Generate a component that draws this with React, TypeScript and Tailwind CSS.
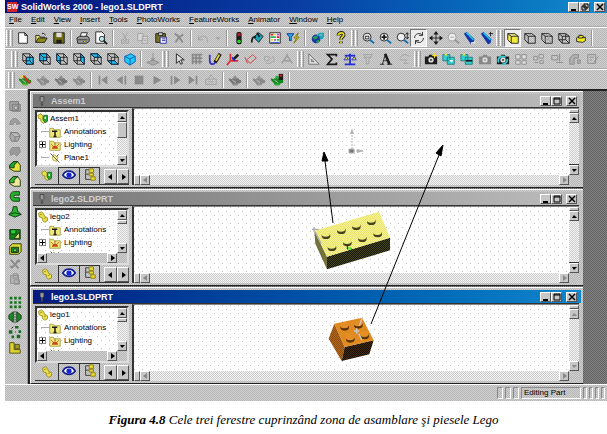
import React from 'react';
import { clsx } from 'clsx';

const ink = '#1c1c1c';
const dim = '#8a8a8a';

function cube(face: 'front' | 'back' | 'left' | 'right' | 'top' | 'bottom') {
  const faces = {
    front: '6,6 14,6 14,14 6,14',
    back: '2,2 10,2 10,10 2,10',
    left: '2,2 6,6 6,14 2,10',
    right: '10,2 14,6 14,14 10,10',
    top: '2,2 10,2 14,6 6,6',
    bottom: '2,10 10,10 14,14 6,14',
  };
  return (
    <g stroke={ink} fill="none">
      <polygon points={faces[face]} fill="#1fc4f4" stroke="#0a58b8" />
      <path d="M2 2h8v8H2zM6 6h8v8H6zM2 2l4 4M10 2l4 4M2 10l4 4M10 10l4 4" />
    </g>
  );
}

function teapot(body: string, accent: string) {
  return (
    <g>
      <path d="M1 6l3 1 1-1h7l1 2h2v3l-3 1-2 2H6l-2-3-3-3z" fill={body} />
      <path d="M6 5h4M8 3v2M5 13h6" stroke={accent} strokeWidth="2" />
      <path d="M5 8l4 3" stroke="#ccc" />
    </g>
  );
}

function magnifier(inner: React.ReactNode, color = ink) {
  return (
    <g fill="none" stroke={color}>
      <circle cx="7" cy="7" r="4.5" fill="#eee" />
      <path d="M10 10l5 4" stroke={color === ink ? '#1673b5' : color} strokeWidth="2" />
      {inner}
    </g>
  );
}

function wireCube(back: React.ReactNode, fill = 'none') {
  return (
    <g stroke={ink} fill={fill}>
      <path d="M2 3h8l4 3v8H6l-4-4zM2 3l4 3h8M6 6v8" />
      {back}
    </g>
  );
}

function camera(fill: string) {
  return (
    <g>
      <path d="M1 5h4l1-2h4l1 2h4v9H1z" fill={fill} />
      <circle cx="8" cy="9" r="3" fill="#ddd" />
      <circle cx="8" cy="9" r="1" fill={fill} />
    </g>
  );
}

function solid(face: string, top: string) {
  return (
    <g stroke="#123312">
      <path d="M2 7l4-4h5l3 4v7H7l-5-3z" fill={face} />
      <path d="M2 7l4-4h5l-4 4v3L2 10z" fill={top} />
    </g>
  );
}

const icons: Record<string, React.ReactNode> = {
  new: <path d="M3 2h7l3 3v9H3zM10 2v3h3" fill="#fff" stroke={ink} />,
  open: (
    <g stroke={ink}>
      <path d="M2 13V5h4l1 2h5v2" fill="#e8e070" />
      <path d="M2 13l3-5h10l-3 5z" fill="#8f8a18" />
      <path d="M9 3c2-1 3 0 4 2" fill="none" />
    </g>
  ),
  save: (
    <g>
      <path d="M2 2h12v12H2z" fill="#6f6c14" stroke={ink} />
      <path d="M5 2h6v5H5z" fill="#ddd" />
      <path d="M5 10h6v4H5z" fill={ink} />
    </g>
  ),
  print: (
    <g stroke={ink}>
      <path d="M5 7l1-5h7l-2 5" fill="#fff" />
      <path d="M1 8l3-2h9l2 2v4l-3 2H2z" fill="#999" />
      <path d="M2 10h11M8 12h4" stroke="#333" />
      <path d="M9 12h2" stroke="#e5d500" />
    </g>
  ),
  preview: (
    <g stroke={ink} fill="#fff">
      <path d="M2 1h7l3 3v10H2z" />
      <circle cx="9" cy="9" r="3" fill="#bde9ef" />
      <path d="M11 11l4 4" strokeWidth="2" />
    </g>
  ),
  cut: <path d="M5 2l5 8M11 2L6 10M4 10h3v4H4zM9 10h3v4H9z" stroke="#a0a0a0" fill="none" />,
  copy: <path d="M2 3h6v8H2zM7 6h6v8H7zM9 9h3M9 11h3" stroke="#a0a0a0" fill="#d8d8d8" />,
  paste: (
    <g stroke={ink}>
      <path d="M2 3h11v10H2z" fill="#77721d" />
      <path d="M5 2h5v3H5z" fill="#ddd" />
      <path d="M7 7h7v7H7z" fill="#fff" stroke="#19209a" />
      <path d="M9 9h4M9 11h4" stroke="#19209a" />
    </g>
  ),
  delete: <path d="M3 3c4 2 7 6 9 10M13 4C9 6 6 9 4 13" stroke={dim} strokeWidth="2" fill="none" />,
  undo: <path d="M3 5v5h5M3 10c2-5 9-6 10 0v3" stroke="#a0a0a0" fill="none" />,
  caret: <path d="M5 7h6l-3 3z" fill="#a0a0a0" />,
  traffic: (
    <g>
      <rect x="5" y="1" width="6" height="14" rx="2" fill={ink} />
      <circle cx="8" cy="4" r="2" fill="#b02020" />
      <circle cx="8" cy="12" r="2" fill="#24e024" />
    </g>
  ),
  paint: (
    <g stroke={ink}>
      <path d="M4 7l6-5 5 4-5 7z" fill="#18a6b8" />
      <path d="M2 13c0-4 1-7 5-6M8 2l3 5" fill="none" strokeWidth="2" />
    </g>
  ),
  palette: (
    <g>
      <path d="M2 2h12v12H2z" fill="#fff" stroke={ink} />
      <path d="M3 4h3M10 7h3" stroke="#e02020" strokeWidth="2" />
      <path d="M7 4h2M3 10h3" stroke="#e9de20" strokeWidth="2" />
      <path d="M10 4h3M7 10h2" stroke="#c33ec3" strokeWidth="2" />
      <path d="M3 7h6M10 10h3" stroke="#30b060" strokeWidth="2" />
      <path d="M3 13h10" stroke="#2038c0" />
    </g>
  ),
  filter: (
    <g>
      <path d="M1 3h8l-3 4v4H4V7z" fill="#27a9d8" stroke="#1234a0" />
      <path d="M14 2L9 8h3l-3 6 6-7h-3z" fill="#f2e61c" stroke="#77700c" />
    </g>
  ),
  globe: (
    <g>
      <circle cx="7" cy="9" r="5" fill="#1735a5" />
      <path d="M3 7l4-2 2 3-4 2zM7 11l3-1 1 2-3 2z" fill="#25a04a" />
      <path d="M8 6l3-3h4v3h-3v2h3" stroke="#18a6b8" fill="none" strokeWidth="2" />
    </g>
  ),
  help: (
    <g fill="none">
      <path d="M5 5c0-4 7-4 6 0-1 2-3 2-3 5M8 12v2" stroke={ink} strokeWidth="4" />
      <path d="M5 5c0-4 7-4 6 0-1 2-3 2-3 5M8 12v2" stroke="#eade18" strokeWidth="2" />
    </g>
  ),
  zoomFit: magnifier(<path d="M5 6h4v3H5z" />),
  zoomIn: magnifier(<path d="M4 7h6M7 4v6" strokeWidth="2" />),
  zoomDrag: magnifier(<path d="M14 2v7M12 4l2-2 2 2M12 7l2 2 2-2" />),
  rotate: <path d="M3 8c0-5 6-7 9-3M12 1v4H8M13 8c0 5-6 7-9 3M4 15v-4h4" stroke={ink} fill="none" />,
  pan: (
    <g>
      <path d="M8 2v12M2 8h12" stroke={ink} />
      <path d="M8 0l3 4H5zM8 16l3-4H5zM0 8l4-3v6zM16 8l-4-3v6z" fill={ink} />
    </g>
  ),
  zoomOut: magnifier(<path d="M5 7h4" />, '#989898'),
  view: (
    <g>
      <path d="M1 3l3-2 9 8-1 5-3 1z" fill="#1238a8" />
      <path d="M4 2l8 8" stroke="#20c0ec" strokeWidth="2" />
      <path d="M9 14l5-1" stroke="#e6e6e6" strokeWidth="2" />
    </g>
  ),
  viewPlus: (
    <g>
      <path d="M1 3l3-2 9 8-1 5-3 1z" fill="#1238a8" />
      <path d="M4 2l8 8" stroke="#20c0ec" strokeWidth="2" />
      <path d="M12 1v5M10 3h5" stroke={ink} />
    </g>
  ),
  shaded: wireCube(null, '#f2ea3c'),
  hidden: wireCube(null),
  hiddenGray: wireCube(<path d="M10 3v7H2M10 10l4 4" stroke="#999" />),
  wireframe: wireCube(<path d="M10 3v7H2M10 10l4 4" />),
  section: (
    <g stroke={ink} fill="#f2ea1c">
      <path d="M3 8l3-3h3v3l4-1v4l-3 2-7-1z" />
      <path d="M6 5h3l2 1-2 2H5z" />
    </g>
  ),
  front: cube('front'),
  back: cube('back'),
  left: cube('left'),
  right: cube('right'),
  top: cube('top'),
  bottom: cube('bottom'),
  iso: (
    <g stroke="#0d57b4">
      <path d="M2 5l7-3 5 3v6l-6 4-6-4z" fill="#22c8f6" />
      <path d="M2 5l6 3 6-3M8 8v7" fill="none" />
    </g>
  ),
  normal: <path d="M8 1v8M6 7l2 3 2-3M1 12l7-3 7 3-7 3z" stroke={dim} fill="#aaa" />,
  select: <path d="M5 2v11l3-3 2 4 2-1-2-4h4z" fill="#ddd" stroke={ink} />,
  grid: <path d="M2 3h12M2 7h12M2 11h12M3 2v12M7 2v12M11 2v12" stroke={dim} strokeWidth="2" />,
  sketch: (
    <g fill="none">
      <path d="M2 3v7c0 5 6 5 6 1" stroke="#3730c0" strokeWidth="2" />
      <path d="M14 2L8 12" stroke={ink} strokeWidth="4" />
      <path d="M13 3l-4 7" stroke="#ebd73a" strokeWidth="2" />
    </g>
  ),
  sketch3d: (
    <g fill="none">
      <path d="M5 2v8h9M5 10l-4 5" stroke="#e03030" strokeWidth="2" />
      <path d="M14 3L8 9" stroke={ink} strokeWidth="3" />
      <path d="M7 6l3 4" stroke="#2028d0" strokeWidth="2" />
    </g>
  ),
  dimension: <path d="M3 9l7-6 4 4-7 6zM1 6l3 7" stroke="#d63838" fill="none" />,
  mirror: <path d="M3 5h5v5H3zM9 8l4-3 1 6-5 1M4 13h6" stroke="#a5a5a5" fill="none" />,
  pattern: <path d="M2 13l6-9 6 9M5 10h6M8 2v3" stroke="#a0a0a0" fill="none" strokeWidth="2" />,
  ruler: <path d="M2 2l12 12H2zM5 8l3 3H5z" stroke="#707070" fill="#ddd" />,
  sigma: <path d="M13 5V3H3l5 5-5 6h10v-2" stroke={ink} fill="none" strokeWidth="2" />,
  balance: (
    <g fill="none" stroke="#1f2fd2" strokeWidth="2">
      <path d="M8 2v12M2 4h12M2 14h12" />
      <path d="M1 9h5l-2-4zM10 9h5l-2-4z" fill="#eadc2c" strokeWidth="1" />
    </g>
  ),
  surface: <path d="M3 3h10l-4 6v4l-3 1V9zM3 6h8" stroke="#a0a0a0" fill="none" />,
  note: (
    <g fill="none" stroke={ink}>
      <path d="M1 14h5M9 14h6M4 14L7 3M6 10h5" />
      <path d="M7 2l5 12" strokeWidth="3" />
    </g>
  ),
  curve: <path d="M3 7c4-6 8-4 11-2M3 9h8l-3 4h5" stroke="#a0a0a0" fill="none" />,
  camera: (
    <g>
      {camera(ink)}
      <path d="M12 1v6M9 4h6" stroke="#efe331" />
    </g>
  ),
  cameraDown: (
    <g>
      <path d="M1 3h8v7H1zM6 6h8v8H6z" fill="#38cfd4" stroke="#147d80" />
      <path d="M8 9h5l-2 3z" fill="#fff" />
      <path d="M3 3h3" stroke="#efe331" strokeWidth="2" />
    </g>
  ),
  cameraStack: (
    <g>
      <path d="M1 3h8v7H1zM6 6h8v8H6z" fill="#38cfd4" stroke="#147d80" />
      <path d="M7 10h7" stroke={ink} strokeWidth="2" />
      <path d="M3 3h3" stroke="#efe331" strokeWidth="2" />
    </g>
  ),
  cameraOff: camera('#888'),
  cameraSpin: (
    <g>
      {camera(ink)}
      <path d="M3 12c-2-5 3-9 8-6M13 8c0 4-3 6-6 6" stroke="#32cdd2" fill="none" strokeWidth="2" />
    </g>
  ),
  table: <path d="M2 3h5v5H2zM9 3h5v5H9zM2 10h5v4H2zM9 10h5v4H9z" stroke={dim} fill="#ddd" />,
  explode: <path d="M2 5h4v4H2zM8 3h5v4H8zM9 10h4v3H9zM3 12h4" stroke={dim} fill="#ccc" />,
  annotate: <path d="M2 4h7v5H2zM11 2v9M7 12h8" stroke={dim} fill="none" />,
  layer: <path d="M2 7l4-4h6v4H7v7H2zM11 9h3v4h-3z" stroke={dim} fill="#b0b0b0" />,
  edit: <path d="M2 3h9v10H2zM4 6h5M4 9h3M14 5l-5 7" stroke={dim} fill="none" />,
  render: (
    <g>
      {teapot('#218b21', '#5cbb37')}
      <path d="M6 3l8 9" stroke="#e82222" strokeWidth="2" />
      <path d="M3 3h3v2H3z" fill="#eadc2c" />
    </g>
  ),
  potGray: teapot('#8a8a8a', '#9b9b9b'),
  potDark: teapot('#777777', '#8f8f8f'),
  potGreen: (
    <g>
      {teapot('#128a20', '#20b030')}
      <path d="M10 1h5v7h-5z" fill={ink} />
      <path d="M11 3h3" stroke="#e82222" strokeWidth="2" />
    </g>
  ),
  first: <path d="M3 3h2v10H3zM13 3v10L6 8z" fill={dim} />,
  prev: <path d="M10 3v10L3 8zM12 3h2v10h-2z" fill={dim} />,
  stop: <path d="M3 3h10v10H3z" fill={dim} />,
  play: <path d="M4 3l9 5-9 5z" fill={dim} />,
  step: <path d="M3 3h2v10H3zM7 3l7 5-7 5z" fill={dim} />,
  last: <path d="M3 3l7 5-7 5zM11 3h2v10h-2z" fill={dim} />,
  record: <path d="M2 7h12v6H2zM5 7l3-5 4 5M5 10h6" stroke="#a0a0a0" fill="none" />,
  extrudeOff: (
    <g stroke="#777" fill="#a5a5a5">
      <path d="M2 3h10v10H2zM5 6h9v8H5z" />
      <circle cx="9" cy="10" r="2" fill="#ccc" />
    </g>
  ),
  sweepOff: <path d="M2 12c1-9 9-9 12-1l-4 1c-1-4-3-4-4 0z" stroke="#888" fill="#9f9f9f" />,
  loftOff: <path d="M3 4h8l3 4-3 6H4l-2-5zM3 4l5 5 6-1M8 9v5" stroke="#777" fill="#a9a9a9" />,
  ribOff: <path d="M2 8l3-4h8l1 5-4 5-3-3-4 2z" stroke="#888" fill="#999" />,
  fillet: solid('#eae13c', '#21a72c'),
  chamfer: solid('#f1e89a', '#35b62d'),
  shell: <path d="M13 3H7C1 3 1 14 7 14h6v-4H8c-2 0-2-3 0-3h5z" fill="#24b52c" stroke="#123312" />,
  draft: (
    <g stroke="#123312" fill="#24b52c">
      <path d="M6 3h4l1 5 4 4-7 3-7-3 4-4z" />
      <path d="M1 12l7-2 7 2" fill="none" />
    </g>
  ),
  rib: (
    <g stroke="#123312">
      <path d="M2 3h12v11H2z" fill="#14821c" />
      <path d="M3 3h6v5H3z" fill="#25d036" />
      <path d="M13 6v7H7z" fill="#f0ea80" />
    </g>
  ),
  hole: (
    <g stroke="#123312">
      <path d="M2 5l3-3h10v9l-3 3H2z" fill="#e3d92e" />
      <path d="M4 6h8v6H4z" fill="#1e9c28" />
      <path d="M6 8h4v3H6z" fill="#6ae26a" />
    </g>
  ),
  cutOff: <path d="M3 3l9 10M13 3L4 13M2 11h4M9 5h5" stroke={dim} fill="none" strokeWidth="2" />,
  wrapOff: <path d="M3 4h9v9H3zM6 2h5v5H6zM7 9h6v5H7z" stroke="#8d8d8d" fill="#b5b5b5" />,
  linear: <path d="M2 2h3v3H2zM7 2h3v3H7zM12 2h3v3h-3zM2 7h3v3H2zM7 7h3v3H7zM12 7h3v3h-3zM2 12h3v3H2zM7 12h3v3H7zM12 12h3v3h-3z" fill="#14731c" />,
  mirrorFeature: (
    <g fill="#1a8a24" stroke="#123312">
      <path d="M6 2v12l-5-4V6zM10 2v12l5-4V6z" />
      <path d="M8 1v14" strokeDasharray="2 1" />
    </g>
  ),
  circular: (
    <g fill="#1b6c22">
      <path d="M8 1h4v3H8zM1 6h4v4H1zM4 12h3v3H4zM10 11h4v4h-4zM12 6h3v3h-3z" />
      <path d="M4 4l2-2M8 8h1" stroke={ink} />
    </g>
  ),
  move: (
    <g stroke="#4f4a0c" fill="#ded42e">
      <path d="M2 3h5v8h7v4H2z" />
      <path d="M8 5h5v5H8z" fill="#a69b24" />
    </g>
  ),
  part: (
    <g stroke="#8a7d10" fill="#ece04a">
      <path d="M2 3l4-2 3 3 1 3 4 2v4l-4 2-3-3V9L3 8z" />
      <path d="M4 5l3-1M9 10l3-1" fill="none" />
    </g>
  ),
  assembly: (
    <g>
      <path d="M1 3l4-2 3 3v4l3 3-2 3-4-3V8L2 7z" fill="#ece04a" stroke="#8a7d10" />
      <path d="M9 3h5v8l-3 2-3-4z" fill="#26a434" stroke="#0d5c18" />
      <path d="M10 5h2v3h-2z" fill="#e8f8e8" />
    </g>
  ),
  annotations: (
    <g>
      <path d="M1 3h5l1 2h8v10H1z" fill="#f0e878" stroke="#9a913a" />
      <path d="M4 7h7M8 7v7M6 14h4" stroke={ink} strokeWidth="2" />
    </g>
  ),
  lighting: (
    <g>
      <path d="M1 3h5l1 2h8v10H1z" fill="#f0e878" stroke="#9a913a" />
      <path d="M4 13c0-6 8-6 8 0z" fill="#c7481c" />
      <path d="M8 5v3M3 7l2 2M13 7l-2 2" stroke="#8b3a18" />
    </g>
  ),
  plane: (
    <g>
      <path d="M6 3l6 4-2 6-6-4z" fill="#f6ef94" stroke="#a79e3b" />
      <path d="M2 2l12 12M13 3l-3 3" stroke="#333" />
    </g>
  ),
  eye: (
    <g>
      <path d="M1 8c3-6 11-6 14 0-3 5-11 5-14 0z" fill="#fff" stroke="#15208c" strokeWidth="2" />
      <circle cx="8" cy="8" r="3" fill="#1526d0" />
    </g>
  ),
  config: (
    <g>
      <path d="M3 2v11h6M3 7h5M3 2h5" stroke="#333" fill="none" />
      <path d="M7 1h5v4H7zM7 6h5v3H7zM9 10h5v4H9z" fill="#e8da30" stroke="#8a7d10" />
    </g>
  ),
  pin: <path d="M5 1h6v6l-2 2v6H7V9L5 7z" fill="#9c9c9c" stroke="#2c2c2c" />,
};

function Icon({ name, className = 'size-4' }: { name: string; className?: string }) {
  return (
    <svg viewBox="0 0 16 16" className={clsx('shrink-0', className)} fill="none" aria-hidden="true">
      {icons[name]}
    </svg>
  );
}

const face = 'bg-[conic-gradient(#b8b8b8_25%,#cfcfcf_0_50%,#b8b8b8_0_75%,#cfcfcf_0)] bg-size-[2px_2px]';
const track = 'bg-[conic-gradient(#cccccc_25%,#f4f4f4_0_50%,#cccccc_0_75%,#f4f4f4_0)] bg-size-[2px_2px]';
const desk = 'bg-[conic-gradient(#606060_25%,#868686_0_50%,#606060_0_75%,#868686_0)] bg-size-[2px_2px]';
const dots =
  'bg-white bg-[image:conic-gradient(from_270deg_at_1px_1px,#c6c6c6_90deg,transparent_0),conic-gradient(from_270deg_at_1px_1px,#c6c6c6_90deg,transparent_0)] bg-size-[8px_8px] [background-position:0_0,4px_4px]';
const raised = 'border border-t-white border-l-white border-r-[#555] border-b-[#555] bg-[#c6c6c6]';
const sunken = 'border border-t-[#888] border-l-[#888] border-r-white border-b-white';

function Grip() {
  return (
    <div className="flex h-4 w-[9px] shrink-0 justify-center gap-px">
      <span className="w-[3px] border-r border-l border-r-[#999] border-l-white" />
      <span className="w-[3px] border-r border-l border-r-[#999] border-l-white" />
    </div>
  );
}

function Separator() {
  return (
    <div className="flex h-4 w-1.5 shrink-0 justify-center">
      <span className="w-0.5 border-r border-l border-r-white border-l-[#999]" />
    </div>
  );
}

// '|' is a separator, '#' a toolbar grip, a leading '*' marks a pressed button
function Tools({ tools, wide = false }: { tools: string[]; wide?: boolean }) {
  return (
    <>
      {tools.map((tool, i) => {
        if (tool === '|') return <Separator key={i} />;
        if (tool === '#') return <Grip key={i} />;
        const pressed = tool.startsWith('*');
        const name = pressed ? tool.slice(1) : tool;
        return (
          <button
            key={i}
            type="button"
            aria-label={name}
            aria-pressed={pressed}
            className={clsx(
              'flex h-[18px] shrink-0 items-center justify-center',
              name === 'caret' ? 'w-3' : wide ? 'w-[18px]' : 'w-[17px]',
              pressed && 'border border-t-[#777] border-l-[#777] border-r-white border-b-white bg-[#ececec]',
            )}
          >
            <Icon name={name} className="size-3.5" />
          </button>
        );
      })}
    </>
  );
}

const menus = ['File', 'Edit', 'View', 'Insert', 'Tools', 'PhotoWorks', 'FeatureWorks', 'Animator', 'Window', 'Help'];

const standard = ['new', 'open', 'save', '|', 'print', 'preview', '|', 'cut', 'copy', 'paste', 'delete', '|', 'undo', 'caret', '|', 'traffic', 'paint', 'palette', 'filter', '|', 'globe', '|', 'help'];
const viewTools = ['#', 'zoomFit', 'zoomIn', 'zoomDrag', '*rotate', 'pan', 'zoomOut', 'view', 'viewPlus', '#', '*shaded', 'hidden', 'hiddenGray', 'wireframe', 'section', '|'];
const orientation = ['front', 'back', 'left', 'right', 'top', 'bottom', 'iso', '|', 'normal', '#'];
const sketchTools = ['select', 'grid', 'sketch', 'sketch3d', 'dimension', 'mirror', 'pattern', '#', 'ruler', 'sigma', 'balance', 'surface', 'note', 'curve', '#'];
const cameraTools = ['camera', 'cameraDown', 'cameraStack', 'cameraOff', 'cameraSpin', 'table', 'explode', 'annotate', 'layer', 'edit'];
const animation = ['render', 'potGray', 'potDark', 'potGray', '|', 'first', 'prev', 'stop', 'play', 'step', 'last', 'record', '|', 'potDark', '|', 'potGray', 'potGreen', '|'];

const features = [
  ['extrudeOff', 'sweepOff', 'loftOff', 'ribOff', 'fillet', 'chamfer', 'shell', 'draft'],
  ['rib', 'hole', 'cutOff', 'wrapOff'],
  ['linear', 'mirrorFeature', 'circular', 'move'],
];

function WindowButtons({ restore = false }: { restore?: boolean }) {
  const button = clsx('flex h-[10px] items-center justify-center', raised);
  return (
    <div className="flex shrink-0">
      <button type="button" aria-label="Minimize" className={clsx(button, 'w-[11px]')}>
        <svg viewBox="0 0 8 8" className="size-2">
          <path d="M1 6h5v2H1z" fill="#000" />
        </svg>
      </button>
      <button type="button" aria-label={restore ? 'Restore' : 'Maximize'} className={clsx(button, 'w-[11px]')}>
        <svg viewBox="0 0 8 8" className="size-2" fill="none" stroke="#000">
          {restore ? <path d="M3 1h4v4H3zM1 3h4v4H1z" /> : <path d="M1 1h6v6H1zM1 2h6" />}
        </svg>
      </button>
      <button type="button" aria-label="Close" className={clsx(button, 'ml-1 w-[11px]')}>
        <svg viewBox="0 0 8 8" className="size-2" stroke="#000" strokeWidth="1.5">
          <path d="M1 1l6 6M7 1L1 7" />
        </svg>
      </button>
    </div>
  );
}

const arrows = {
  up: 'M2 6h5L4 3z',
  down: 'M2 3h5L4 6z',
  left: 'M6 1v6L2 4z',
  right: 'M3 1v6l4-3z',
};

function ArrowButton({ dir, faded = false }: { dir: keyof typeof arrows; faded?: boolean }) {
  return (
    <button type="button" aria-label={`Scroll ${dir}`} className={clsx('flex size-2.5 shrink-0 items-center justify-center', raised)}>
      <svg viewBox="0 0 8 8" className="size-2">
        <path d={arrows[dir]} fill={faded ? '#888' : '#000'} />
      </svg>
    </button>
  );
}

function FeatureTree({ name, icon, scroll }: { name: string; icon: string; scroll: boolean }) {
  const items = ['Annotations', 'Lighting', 'Plane1'];
  return (
    <div className="flex w-[98px] shrink-0 flex-col px-0.5 pt-0.5">
      <div className="flex h-[57px] border-2 border-t-[#333] border-l-[#333] border-r-[#ddd] border-b-[#ddd]">
        <div className={clsx('flex min-w-0 flex-1 flex-col overflow-hidden', dots)}>
          <ul className="min-h-0 flex-1 overflow-hidden text-[8px] leading-[13px]">
            <li className="flex items-center gap-px">
              <Icon name={icon} className="size-3" />
              {name}
            </li>
            {items.map((item) => (
              <li key={item} className="flex items-center">
                <span className="flex w-3 shrink-0 items-center">
                  {item === 'Lighting' ? (
                    <button type="button" aria-label="Expand Lighting" className="ml-0.5 flex size-[7px] items-center justify-center border border-[#888] bg-white">
                      <svg viewBox="0 0 5 5" className="size-[5px]" stroke="#000">
                        <path d="M0 2.5h5M2.5 0v5" />
                      </svg>
                    </button>
                  ) : (
                    <span className="ml-1 h-px w-2 bg-[#aaa]" />
                  )}
                </span>
                <Icon name={item.replace(/\d/, '').toLowerCase()} className="mr-[3px] size-3" />
                {item}
              </li>
            ))}
          </ul>
          {scroll && (
            <div className={clsx('flex justify-between', track)}>
              <ArrowButton dir="left" />
              <div className={clsx('flex-1', face)} />
              <ArrowButton dir="right" />
            </div>
          )}
        </div>
        <div className={clsx('flex w-2.5 flex-col', track)}>
          <ArrowButton dir="up" />
          <div className={clsx(scroll ? 'h-1' : 'h-4', raised)} />
          <div className="flex-1" />
          <ArrowButton dir="down" />
          {scroll && <div className={clsx('h-2.5', face)} />}
        </div>
      </div>
      <div className="flex h-[18px] border-b border-b-[#333]">
        <button type="button" aria-label="Feature tree" className="flex w-[23px] items-center justify-center">
          <Icon name={icon} className="size-3" />
        </button>
        <button type="button" aria-label="Properties" className="flex w-[22px] items-start justify-center border-t border-r border-l border-[#333]">
          <Icon name="eye" className="size-3.5" />
        </button>
        <button type="button" aria-label="Configurations" className="flex w-[20px] items-start justify-center border-t border-r border-[#333]">
          <Icon name="config" className="size-3.5" />
        </button>
        <div className="flex flex-1 pt-0.5 pl-1">
          {(['left', 'right'] as const).map((dir) => (
            <button key={dir} type="button" aria-label={`Tabs ${dir}`} className={clsx('flex flex-1 items-center justify-center', raised)}>
              <svg viewBox="0 0 8 8" className="size-2">
                <path d={arrows[dir]} />
              </svg>
            </button>
          ))}
        </div>
      </div>
    </div>
  );
}

interface ChildProps {
  title: string;
  name: string;
  icon: string;
  active?: boolean;
  scroll?: boolean;
  children: React.ReactNode;
}

function ChildWindow({ title, name, icon, active = false, scroll = true, children }: ChildProps) {
  return (
    <section className={clsx('border-t border-b border-l border-t-white border-b-[#222] border-l-white p-0.5', face)}>
      <header
        className={clsx(
          'flex h-[13px] items-center gap-1 px-1 text-[9px] leading-3 font-bold',
          active
            ? 'bg-linear-to-r from-[#061a80] to-[#1186cc] text-white'
            : 'bg-linear-to-r from-[#767676] to-[#bdbdbd] text-[#cfcfcf]',
        )}
      >
        <Icon name="pin" className="size-2.5" />
        <h2 className="flex-1">{title}</h2>
        <WindowButtons />
      </header>
      <div className="mr-0.5 flex border-t border-t-[#333]">
        <FeatureTree name={name} icon={icon} scroll={scroll} />
        <div className="ml-px flex min-w-0 flex-1 flex-col border-t border-l-2 border-t-[#888] border-l-[#333]">
          <div className="flex">
            <div className={clsx('flex h-[66px] flex-1 items-center justify-center', dots)}>{children}</div>
            <div className={clsx('flex w-2.5 flex-col', track)}>
              <div className={clsx('h-1', raised)} />
              <ArrowButton dir="up" faded={active} />
              <div className={clsx('flex-1', !active && 'border-b border-b-[#333]')} />
              <ArrowButton dir="down" faded={active} />
            </div>
          </div>
          <div className={clsx('flex h-2.5', track)}>
            <div className={clsx('w-1.5', raised)} />
            <ArrowButton dir="left" faded />
            <div className="flex-1" />
            <ArrowButton dir="right" faded />
            <div className={clsx('w-2.5', face)} />
          </div>
        </div>
      </div>
    </section>
  );
}

function Triad() {
  return (
    <svg viewBox="0 0 32 30" width="32" height="30" fill="#b4b4b4" stroke="#b4b4b4">
      <path d="M16 5v19" strokeDasharray="2 1" />
      <path d="M16 1l2 6h-4z" stroke="none" />
      <path d="M16 24h11" strokeDasharray="3 1" />
      <path d="M21 22l7 2-7 2z" stroke="none" />
      <path d="M13 22h5v4h-5z" fill="#777" />
    </svg>
  );
}

function Stud({ x, y, top, shade }: { x: number; y: number; top: string; shade: string }) {
  return (
    <g>
      <ellipse cx={x} cy={y + 3} rx="13" ry="10" fill={shade} />
      <ellipse cx={x - 1} cy={y - 3} rx="13" ry="9" fill={top} />
    </g>
  );
}

function YellowBrick() {
  const studs = [[211, 77], [166, 92], [121, 104], [75, 119], [230, 114], [184, 128], [139, 141], [93, 155]];
  return (
    <svg viewBox="33 48 240 177" width="80" height="59">
      <defs>
        <pattern id="olive" width="6" height="6" patternUnits="userSpaceOnUse">
          <path d="M0 0h6v6H0z" fill="#17170a" />
          <path d="M0 0h3v3H0zM3 3h3v3H3z" fill="#46441a" />
        </pattern>
        <pattern id="cream" width="6" height="6" patternUnits="userSpaceOnUse">
          <path d="M0 0h6v6H0z" fill="#f6f29a" />
          <path d="M0 0h3v3H0zM3 3h3v3H3z" fill="#e9e468" />
        </pattern>
      </defs>
      <path d="M40 107L78 185V223L43 146z" fill="#74713a" />
      <path d="M78 185L267 128V166L78 223z" fill="url(#olive)" />
      <path d="M40 107L234 50L267 128L78 185z" fill="url(#cream)" />
      {studs.map(([x, y]) => (
        <Stud key={x} x={x} y={y} top="#efea7a" shade="#44411c" />
      ))}
      <path d="M33 103h20M39 97v13M42 110l18 36" stroke="#aaa" strokeWidth="4" />
      <path d="M139 150v12h14" stroke="#222" strokeWidth="3" fill="none" />
      <path d="M141 156h9v9h-9z" fill="#6fe23c" />
    </svg>
  );
}

function OrangeBrick() {
  const studs = [[175, 100], [134, 106], [194, 132], [151, 142]];
  return (
    <svg viewBox="84 72 144 141" width="48" height="47">
      <defs>
        <pattern id="brown" width="6" height="6" patternUnits="userSpaceOnUse">
          <path d="M0 0h6v6H0z" fill="#8a4d10" />
          <path d="M0 0h3v3H0zM3 3h3v3H3z" fill="#b5661c" />
        </pattern>
        <pattern id="dark" width="6" height="6" patternUnits="userSpaceOnUse">
          <path d="M0 0h6v6H0z" fill="#100c06" />
          <path d="M0 0h3v3H0zM3 3h3v3H3z" fill="#4a2e0c" />
        </pattern>
      </defs>
      <path d="M103 98L134 168L125 210L86 143z" fill="url(#brown)" />
      <path d="M134 168L221 148L208 190L125 210z" fill="url(#dark)" />
      <path d="M103 98L186 80L221 148L134 168z" fill="#e08a20" />
      {studs.map(([x, y]) => (
        <Stud key={x} x={x} y={y} top="#e58e24" shade="#5c340a" />
      ))}
      <path d="M186 82l-8 22M162 120h16M170 112v16M176 128l10 20" stroke="#c9c9c9" strokeWidth="4" />
    </svg>
  );
}

// Leader lines from the two bricks up to the assembly area
function Leaders() {
  return (
    <svg viewBox="0 0 140 190" width="140" height="190" className="pointer-events-none absolute top-[50px] left-[284px]" stroke="#000">
      <path d="M19 82L11 20M57 183L125 14" />
      <path d="M10 11l-2 9h6zM129 4l-7 8 5 3z" fill="#000" />
    </svg>
  );
}

export default function App() {
  return (
    <div className="bg-white font-['Liberation_Sans',Arial,sans-serif] text-black">
      <main className={clsx('ml-[5px] overflow-hidden', face)}>
        <header className="flex h-[13px] items-center gap-1 bg-linear-to-r from-[#05127c] via-[#0a3fa4] to-[#138bcc] pr-0.5 text-[9px] leading-3 font-bold text-white">
          <span className="ml-0.5 w-[10px] bg-[#d0242b] text-center text-[7px] leading-[10px]">SW</span>
          <h1 className="flex-1">SolidWorks 2000 - lego1.SLDPRT</h1>
          <WindowButtons restore />
        </header>

        <nav className="flex h-[14px] items-center gap-[9px] border-b border-b-[#aaa] pl-1 text-[8px]">
          {menus.map((menu) => (
            <button key={menu} type="button">
              <u>{menu[0]}</u>
              {menu.slice(1)}
            </button>
          ))}
        </nav>

        <div className="flex h-[21px] items-center border-t border-b border-t-white border-b-[#aaa]">
          <Grip />
          <Tools tools={standard} wide />
          <Tools tools={viewTools} />
        </div>
        <div className="flex h-[21px] items-center border-t border-b border-t-white border-b-[#aaa] pl-[5px]">
          <Grip />
          <Tools tools={orientation} />
          <Tools tools={sketchTools} wide />
          <Tools tools={cameraTools} wide />
        </div>
        <div className="flex h-[20px] items-center border-t border-t-white pl-0.5">
          <Grip />
          <Tools tools={animation} wide />
        </div>

        <div className="flex">
          <aside className="flex w-[23px] shrink-0 flex-col items-center gap-2 border-t border-r border-t-white border-r-[#999] pt-2 pr-0.5">
            {features.map((group, i) => (
              <div key={i} className="flex flex-col">
                {group.map((name) => (
                  <button key={name} type="button" aria-label={name} className="flex h-[15px] items-center">
                    <Icon name={name} className="size-3.5" />
                  </button>
                ))}
              </div>
            ))}
          </aside>
          <div className={clsx('relative flex min-w-0 flex-1 flex-col gap-px border-t-2 border-l-2 border-[#222] pr-6', desk)}>
            <ChildWindow title="Assem1" name="Assem1" icon="assembly" scroll={false}>
              <Triad />
            </ChildWindow>
            <ChildWindow title="lego2.SLDPRT" name="lego2" icon="part">
              <YellowBrick />
            </ChildWindow>
            <ChildWindow title="lego1.SLDPRT" name="lego1" icon="part" active>
              <OrangeBrick />
            </ChildWindow>
            <Leaders />
          </div>
        </div>

        <footer className="flex h-[17px] items-center justify-end gap-0.5 border-t border-t-white pr-0.5 text-[8px]">
          <span className={clsx('h-3 w-1.5', sunken)} />
          <span className={clsx('h-3 w-1.5', sunken)} />
          <span className={clsx('h-3 w-1.5', sunken)} />
          <span className={clsx('h-3 w-[60px] pl-0.5 leading-[10px]', sunken)}>Editing Part</span>
          <span className={clsx('h-3 w-1', sunken)} />
          <span className={clsx('h-3 w-1', sunken)} />
          <span className={clsx('h-3 w-1', sunken)} />
          <span className={clsx('h-3 w-1', sunken)} />
        </footer>
      </main>
      <p className="pt-[9px] text-center font-['Liberation_Serif','Times_New_Roman',serif] text-[13px] leading-5 italic">
        <b>Figura 4.8</b> Cele trei ferestre cuprinzând zona de asamblare şi piesele Lego
      </p>
    </div>
  );
}
